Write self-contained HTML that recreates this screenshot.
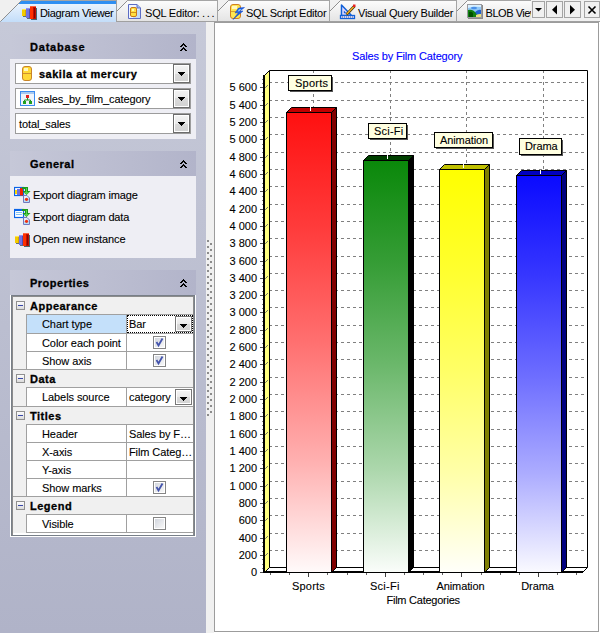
<!DOCTYPE html><html><head><meta charset='utf-8'><style>html,body{margin:0;padding:0;overflow:hidden;background:#fff}#r{position:relative;width:600px;height:633px;overflow:hidden;background:#f0f0f0;font-family:'Liberation Sans', sans-serif}</style></head><body><div id='r'>
<svg width='600' height='22' style='position:absolute;left:0;top:0'><defs><linearGradient id='ina' x1='0' y1='0' x2='0' y2='1'><stop offset='0' stop-color='#fdfdfd'/><stop offset='1' stop-color='#e3e3e3'/></linearGradient><linearGradient id='act' x1='0' y1='0' x2='0' y2='1'><stop offset='0' stop-color='#f2f8fe'/><stop offset='1' stop-color='#c3ddf9'/></linearGradient></defs><rect x='0' y='0' width='600' height='22' fill='#f0f0f0'/><polygon points='446,22 468,0 532,0 532,21 ' fill='url(#ina)'/><line x1='446.5' y1='21.5' x2='467.5' y2='0.5' stroke='#8f8f8f' stroke-width='1'/><rect x='467' y='0' width='64' height='1' fill='#a5a5a5'/><rect x='531' y='0' width='1' height='21' fill='#a5a5a5'/><polygon points='319,22 341,0 457,0 457,21 ' fill='url(#ina)'/><line x1='319.5' y1='21.5' x2='340.5' y2='0.5' stroke='#8f8f8f' stroke-width='1'/><rect x='340' y='0' width='116' height='1' fill='#a5a5a5'/><rect x='456' y='0' width='1' height='21' fill='#a5a5a5'/><polygon points='207,22 229,0 330,0 330,21 ' fill='url(#ina)'/><line x1='207.5' y1='21.5' x2='228.5' y2='0.5' stroke='#8f8f8f' stroke-width='1'/><rect x='228' y='0' width='101' height='1' fill='#a5a5a5'/><rect x='329' y='0' width='1' height='21' fill='#a5a5a5'/><polygon points='106,22 128,0 218,0 218,21 ' fill='url(#ina)'/><line x1='106.5' y1='21.5' x2='127.5' y2='0.5' stroke='#8f8f8f' stroke-width='1'/><rect x='127' y='0' width='90' height='1' fill='#a5a5a5'/><rect x='217' y='0' width='1' height='21' fill='#a5a5a5'/><rect x='0' y='21' width='600' height='1' fill='#a0a0a0'/><polygon points='0,22 22,0 117,0 117,22' fill='url(#act)'/><clipPath id='ac'><polygon points='0,22 22,0 117,0 117,22'/></clipPath><rect x='0' y='1' width='117' height='3' fill='#2f8ff2' clip-path='url(#ac)'/><line x1='0.5' y1='21.5' x2='21.5' y2='0.5' stroke='#8f8f8f' stroke-width='1'/><rect x='21' y='0' width='95' height='1' fill='#a5a5a5'/><rect x='116' y='0' width='1' height='22' fill='#a0a0a0'/><rect x='531' y='0' width='69' height='21' fill='#f0f0f0'/><rect x='532.5' y='1.5' width='12' height='16' fill='#f0f0f0' stroke='#a3a3a3' stroke-width='1'/><rect x='546.5' y='1.5' width='16' height='16' fill='#f0f0f0' stroke='#a3a3a3' stroke-width='1'/><rect x='564.5' y='1.5' width='16' height='16' fill='#f0f0f0' stroke='#a3a3a3' stroke-width='1'/><rect x='584.5' y='1.5' width='15' height='16' fill='#f0f0f0' stroke='#a3a3a3' stroke-width='1'/><polygon points='535,8 542,8 538.5,11.5' fill='#000'/><polygon points='557,5 557,14.5 552,9.75' fill='#000'/><polygon points='570,5 570,14.5 575,9.75' fill='#000'/><path d='M588.5,6.5 L595.5,13.5 M595.5,6.5 L588.5,13.5' stroke='#000' stroke-width='1.6'/><path d='M128.5,4.5 H137 L140.5,8 V18.5 H128.5 Z' fill='#eef4ff' stroke='#5c6cc4'/><path d='M134,11 L140,9 V18 H133 Z' fill='#b8d4f4' opacity='0.8'/><path d='M137,4.5 V8 H140.5' fill='#a0c0ec' stroke='#5c6cc4'/><rect x='130.5' y='7.5' width='6' height='9' rx='1.5' fill='#ffe040' stroke='#c87818'/><rect x='132' y='9' width='2' height='2' fill='#fff8b0'/><line x1='131' y1='12.5' x2='136' y2='12.5' stroke='#d09020'/><rect x='230.5' y='4.5' width='10' height='14' rx='2.5' fill='#ffe650' stroke='#d08020'/><rect x='232' y='6' width='5' height='3' fill='#fff8c0'/><line x1='231' y1='11.5' x2='236' y2='11.5' stroke='#d8a030'/><path d='M244.5,7.5 L238.5,8 L235,13 L238.5,12.5 L233,19.5 L243,11 L239.5,11.2 Z' fill='#1a5ee8' stroke='#0c44c8' stroke-width='0.5'/><path d='M241.5,9 L239,9.3 L237.5,11.5 L239.5,11.2 Z' fill='#8cc8ff'/><path d='M341.5,5 V15.5 H351.5 Z' fill='#e4dcff' stroke='#1060d8' stroke-width='1.5' stroke-linejoin='round'/><path d='M343.8,10.5 V13.3 H346.5 Z' fill='#1060d8'/><rect x='340.5' y='15.5' width='14' height='3' fill='#ece4ff' stroke='#1060d8' stroke-width='1.3'/><path d='M342,17 h1 M344,17 h1 M346,17 h1 M348,17 h1 M350,17 h1 M352,17 h1' stroke='#506080' stroke-width='1'/><path d='M346.5,14.5 L354.5,6' stroke='#3a3010' stroke-width='2.6'/><path d='M346.8,14 L354.2,6.3' stroke='#f8b020' stroke-width='1.4'/><rect x='353' y='4.5' width='2.5' height='2.5' fill='#e82020'/><rect x='468' y='5' width='15' height='14' fill='#8a8a8a'/><rect x='467.5' y='4.5' width='14' height='13' fill='#90c8f8' stroke='#9a9aa0'/><path d='M468,8 Q474,6 481,7 V5 H468 Z' fill='#d8f0ff'/><ellipse cx='474' cy='8' rx='3' ry='1.2' fill='#4a90e8'/><path d='M474,13 Q478,9 481,10 V16 H474 Z' fill='#2060d0'/><path d='M468,10 Q471,9 474,11 Q476,13 477,15 V17 H468 Z' fill='#108010'/><path d='M469,12 Q471,11 473,13 V17 H469 Z' fill='#005000'/><path d='M476,15 Q479,13.5 481,14 V17 H476 Z' fill='#e8e080'/></svg>
<svg width='16' height='15' style='position:absolute;left:22px;top:6px'><rect x='1' y='10' width='4' height='1' fill='#405058' opacity='0.8'/><rect x='5' y='12' width='3' height='1' fill='#405058' opacity='0.8'/><rect x='14' y='2' width='1' height='11' fill='#305058' opacity='0.85'/><rect x='9' y='13' width='6' height='1' fill='#305058' opacity='0.85'/><rect x='0' y='3' width='4' height='7' fill='#f4cc00'/><rect x='0' y='3' width='4' height='1' fill='#ffe650'/><rect x='3' y='4' width='1' height='6' fill='#d8a800'/><rect x='4' y='2' width='4' height='10' fill='#7272e4'/><rect x='4' y='2' width='4' height='1' fill='#9090f0'/><rect x='7' y='3' width='1' height='9' fill='#5050b0'/><rect x='8' y='0' width='6' height='13' fill='#ff3000'/><rect x='8' y='0' width='6' height='1' fill='#ff6040'/><rect x='11' y='1' width='3' height='12' fill='#c01000'/><rect x='12' y='2' width='1' height='10' fill='#900000'/></svg>
<div style="position:absolute;left:40px;top:7.69px;font:normal 11px/11px 'Liberation Sans', sans-serif;color:#000;letter-spacing:-0.33px;white-space:nowrap;-webkit-text-stroke:0.05px #000;">Diagram Viewer</div>
<div style="position:absolute;left:145px;top:7.69px;font:normal 11px/11px 'Liberation Sans', sans-serif;color:#000;letter-spacing:-0.2px;white-space:nowrap;-webkit-text-stroke:0.05px #000;">SQL Editor: <span style='letter-spacing:1.6px'>...</span></div>
<div style="position:absolute;left:246px;top:7.69px;font:normal 11px/11px 'Liberation Sans', sans-serif;color:#000;letter-spacing:-0.25px;white-space:nowrap;-webkit-text-stroke:0.05px #000;">SQL Script Editor</div>
<div style="position:absolute;left:358px;top:7.69px;font:normal 11px/11px 'Liberation Sans', sans-serif;color:#000;letter-spacing:-0.25px;white-space:nowrap;-webkit-text-stroke:0.05px #000;">Visual Query Builder</div>
<div style='position:absolute;left:0;top:0;width:531px;height:22px;overflow:hidden'>
<div style="position:absolute;left:485.5px;top:7.69px;font:normal 11px/11px 'Liberation Sans', sans-serif;color:#000;letter-spacing:-0.45px;white-space:nowrap;-webkit-text-stroke:0.05px #000;">BLOB Viewer</div>
</div>
<div style="position:absolute;left:0px;top:22px;width:206px;height:611px;background:linear-gradient(#c6c9d8,#b0b3c8)"></div>
<div style="position:absolute;left:206px;top:22px;width:8px;height:611px;background:#f0f0f0"></div>
<svg width='600' height='633' style='position:absolute;left:0;top:0'><rect x='207' y='240' width='2' height='2' fill='#8c8c8c'/><rect x='210' y='243' width='2' height='2' fill='#8c8c8c'/><rect x='207' y='246' width='2' height='2' fill='#8c8c8c'/><rect x='210' y='249' width='2' height='2' fill='#8c8c8c'/><rect x='207' y='252' width='2' height='2' fill='#8c8c8c'/><rect x='210' y='255' width='2' height='2' fill='#8c8c8c'/><rect x='207' y='258' width='2' height='2' fill='#8c8c8c'/><rect x='210' y='261' width='2' height='2' fill='#8c8c8c'/><rect x='207' y='264' width='2' height='2' fill='#8c8c8c'/><rect x='210' y='267' width='2' height='2' fill='#8c8c8c'/><rect x='207' y='270' width='2' height='2' fill='#8c8c8c'/><rect x='210' y='273' width='2' height='2' fill='#8c8c8c'/><rect x='207' y='276' width='2' height='2' fill='#8c8c8c'/><rect x='210' y='279' width='2' height='2' fill='#8c8c8c'/><rect x='207' y='282' width='2' height='2' fill='#8c8c8c'/><rect x='210' y='285' width='2' height='2' fill='#8c8c8c'/><rect x='207' y='288' width='2' height='2' fill='#8c8c8c'/><rect x='210' y='291' width='2' height='2' fill='#8c8c8c'/><rect x='207' y='294' width='2' height='2' fill='#8c8c8c'/><rect x='210' y='297' width='2' height='2' fill='#8c8c8c'/><rect x='207' y='300' width='2' height='2' fill='#8c8c8c'/><rect x='210' y='303' width='2' height='2' fill='#8c8c8c'/><rect x='207' y='306' width='2' height='2' fill='#8c8c8c'/><rect x='210' y='309' width='2' height='2' fill='#8c8c8c'/><rect x='207' y='312' width='2' height='2' fill='#8c8c8c'/><rect x='210' y='315' width='2' height='2' fill='#8c8c8c'/><rect x='207' y='318' width='2' height='2' fill='#8c8c8c'/><rect x='210' y='321' width='2' height='2' fill='#8c8c8c'/><rect x='207' y='324' width='2' height='2' fill='#8c8c8c'/><rect x='210' y='327' width='2' height='2' fill='#8c8c8c'/><rect x='207' y='330' width='2' height='2' fill='#8c8c8c'/><rect x='210' y='333' width='2' height='2' fill='#8c8c8c'/><rect x='207' y='336' width='2' height='2' fill='#8c8c8c'/><rect x='210' y='339' width='2' height='2' fill='#8c8c8c'/><rect x='207' y='342' width='2' height='2' fill='#8c8c8c'/><rect x='210' y='345' width='2' height='2' fill='#8c8c8c'/><rect x='207' y='348' width='2' height='2' fill='#8c8c8c'/><rect x='210' y='351' width='2' height='2' fill='#8c8c8c'/><rect x='207' y='354' width='2' height='2' fill='#8c8c8c'/><rect x='210' y='357' width='2' height='2' fill='#8c8c8c'/><rect x='207' y='360' width='2' height='2' fill='#8c8c8c'/><rect x='210' y='363' width='2' height='2' fill='#8c8c8c'/><rect x='207' y='366' width='2' height='2' fill='#8c8c8c'/><rect x='210' y='369' width='2' height='2' fill='#8c8c8c'/><rect x='207' y='372' width='2' height='2' fill='#8c8c8c'/><rect x='210' y='375' width='2' height='2' fill='#8c8c8c'/><rect x='207' y='378' width='2' height='2' fill='#8c8c8c'/><rect x='210' y='381' width='2' height='2' fill='#8c8c8c'/><rect x='207' y='384' width='2' height='2' fill='#8c8c8c'/><rect x='210' y='387' width='2' height='2' fill='#8c8c8c'/><rect x='207' y='390' width='2' height='2' fill='#8c8c8c'/><rect x='210' y='393' width='2' height='2' fill='#8c8c8c'/><rect x='207' y='396' width='2' height='2' fill='#8c8c8c'/><rect x='210' y='399' width='2' height='2' fill='#8c8c8c'/><rect x='207' y='402' width='2' height='2' fill='#8c8c8c'/><rect x='210' y='405' width='2' height='2' fill='#8c8c8c'/><rect x='207' y='408' width='2' height='2' fill='#8c8c8c'/><rect x='210' y='411' width='2' height='2' fill='#8c8c8c'/><rect x='207' y='414' width='2' height='2' fill='#8c8c8c'/></svg>
<div style="position:absolute;left:10px;top:34px;width:186px;height:25px;background:linear-gradient(90deg,#c6c8d8,#b2b4ca)"></div>
<div style="position:absolute;left:30px;top:41.69px;font:bold 11px/11px 'Liberation Sans', sans-serif;color:#000;letter-spacing:0.8px;white-space:nowrap;-webkit-text-stroke:0.3px #000;">Database</div>
<svg width='8' height='8' style='position:absolute;left:180px;top:43px' fill='#000'><rect x='3' y='0' width='1' height='1'/><rect x='2' y='1' width='3' height='1'/><rect x='1' y='2' width='2' height='1'/><rect x='4' y='2' width='2' height='1'/><rect x='0' y='3' width='2' height='1'/><rect x='5' y='3' width='2' height='1'/><rect x='3' y='4' width='1' height='1'/><rect x='2' y='5' width='3' height='1'/><rect x='1' y='6' width='2' height='1'/><rect x='4' y='6' width='2' height='1'/><rect x='0' y='7' width='2' height='1'/><rect x='5' y='7' width='2' height='1'/></svg>
<div style="position:absolute;left:10px;top:59px;width:186px;height:80px;background:#eeeef4"></div>
<div style="position:absolute;left:15px;top:63px;width:176px;height:21px;background:#fff;box-sizing:border-box;border:1px solid #9c9c9c"></div>
<div style="position:absolute;left:173px;top:64px;width:17px;height:19px;box-sizing:border-box;border:1px solid #6c6c6c;background:linear-gradient(#f4f4f4,#e9e9e9 50%,#dadada 50%,#d2d2d2);box-shadow:inset 1px 1px 0 #fff, inset -1px -1px 0 #fff"></div>
<svg width='7' height='4' style='position:absolute;left:178px;top:72px' fill='#000'><rect x='0' y='0' width='7' height='1'/><rect x='1' y='1' width='5' height='1'/><rect x='2' y='2' width='3' height='1'/><rect x='3' y='3' width='1' height='1'/></svg>
<div style="position:absolute;left:15px;top:88px;width:176px;height:21px;background:#fff;box-sizing:border-box;border:1px solid #9c9c9c"></div>
<div style="position:absolute;left:173px;top:89px;width:17px;height:19px;box-sizing:border-box;border:1px solid #6c6c6c;background:linear-gradient(#f4f4f4,#e9e9e9 50%,#dadada 50%,#d2d2d2);box-shadow:inset 1px 1px 0 #fff, inset -1px -1px 0 #fff"></div>
<svg width='7' height='4' style='position:absolute;left:178px;top:97px' fill='#000'><rect x='0' y='0' width='7' height='1'/><rect x='1' y='1' width='5' height='1'/><rect x='2' y='2' width='3' height='1'/><rect x='3' y='3' width='1' height='1'/></svg>
<div style="position:absolute;left:15px;top:113px;width:176px;height:21px;background:#fff;box-sizing:border-box;border:1px solid #9c9c9c"></div>
<div style="position:absolute;left:173px;top:114px;width:17px;height:19px;box-sizing:border-box;border:1px solid #6c6c6c;background:linear-gradient(#f4f4f4,#e9e9e9 50%,#dadada 50%,#d2d2d2);box-shadow:inset 1px 1px 0 #fff, inset -1px -1px 0 #fff"></div>
<svg width='7' height='4' style='position:absolute;left:178px;top:122px' fill='#000'><rect x='0' y='0' width='7' height='1'/><rect x='1' y='1' width='5' height='1'/><rect x='2' y='2' width='3' height='1'/><rect x='3' y='3' width='1' height='1'/></svg>
<svg width='12' height='17' style='position:absolute;left:21px;top:65px'><rect x='1.5' y='1.5' width='9' height='14' rx='2.5' fill='#ffd838' stroke='#c88428'/><rect x='3' y='3' width='4' height='3' fill='#fff8c0'/><line x1='2' y1='8.5' x2='10' y2='8.5' stroke='#d09030'/></svg>
<div style="position:absolute;left:39px;top:68.69px;font:bold 11px/11px 'Liberation Sans', sans-serif;color:#000;letter-spacing:0.5px;white-space:nowrap;-webkit-text-stroke:0.3px #000;">sakila at mercury</div>
<svg width='16' height='16' style='position:absolute;left:20px;top:91px'><rect x='0.5' y='0.5' width='14' height='14' fill='#eef4fc' stroke='#3c8cf0'/><rect x='1' y='1' width='13' height='2' fill='#a8c8f0'/><rect x='6' y='4' width='3' height='3' fill='#e02020'/><path d='M7.5,7 V9 M4.5,11 V9 H10.5 V11' stroke='#209020' fill='none'/><rect x='3' y='10' width='3' height='3' fill='#20a020'/><rect x='9' y='10' width='3' height='3' fill='#20a020'/></svg>
<div style="position:absolute;left:38px;top:93.69px;font:normal 11px/11px 'Liberation Sans', sans-serif;color:#000;letter-spacing:-0.12px;white-space:nowrap;-webkit-text-stroke:0.1px #000;">sales_by_film_category</div>
<div style="position:absolute;left:19px;top:118.69px;font:normal 11px/11px 'Liberation Sans', sans-serif;color:#000;letter-spacing:-0.1px;white-space:nowrap;-webkit-text-stroke:0.1px #000;">total_sales</div>
<div style="position:absolute;left:10px;top:151px;width:186px;height:25px;background:linear-gradient(90deg,#c6c8d8,#b2b4ca)"></div>
<div style="position:absolute;left:30px;top:158.69px;font:bold 11px/11px 'Liberation Sans', sans-serif;color:#000;letter-spacing:0.5px;white-space:nowrap;-webkit-text-stroke:0.3px #000;">General</div>
<svg width='8' height='8' style='position:absolute;left:180px;top:160px' fill='#000'><rect x='3' y='0' width='1' height='1'/><rect x='2' y='1' width='3' height='1'/><rect x='1' y='2' width='2' height='1'/><rect x='4' y='2' width='2' height='1'/><rect x='0' y='3' width='2' height='1'/><rect x='5' y='3' width='2' height='1'/><rect x='3' y='4' width='1' height='1'/><rect x='2' y='5' width='3' height='1'/><rect x='1' y='6' width='2' height='1'/><rect x='4' y='6' width='2' height='1'/><rect x='0' y='7' width='2' height='1'/><rect x='5' y='7' width='2' height='1'/></svg>
<div style="position:absolute;left:10px;top:176px;width:186px;height:82px;background:#eeeef4"></div>
<svg width='18' height='18' style='position:absolute;left:14px;top:186px'><rect x='0.5' y='1.5' width='9' height='8' fill='#fff' stroke='#0a64e8' stroke-width='1.2'/><rect x='1' y='4' width='2' height='4' fill='#f8d800'/><rect x='3' y='3' width='3' height='6' fill='#7070d8'/><rect x='6' y='2' width='3' height='7.5' fill='#f02000'/><path d='M8,1 H14 V5 H16.5 L12.5,9 L8.5,5 H11 V3 H8 Z' fill='#1c9a1c'/><path d='M12,2 H13 V6 H15 L12.5,8.5 L10,6 H12 Z' fill='#58d048'/><path d='M9.5,9.5 H13 L15.5,12 V16.5 H9.5 Z' fill='#e4eefc' stroke='#7078c0'/><path d='M10,14 L15,12 V16 H10 Z' fill='#b8dcf4'/><circle cx='12.5' cy='13.3' r='1.6' fill='#f03010'/></svg>
<div style="position:absolute;left:33px;top:189.69px;font:normal 11px/11px 'Liberation Sans', sans-serif;color:#000;letter-spacing:-0.15px;white-space:nowrap;-webkit-text-stroke:0.1px #000;">Export diagram image</div>
<svg width='18' height='18' style='position:absolute;left:14px;top:208px'><rect x='0.5' y='1.5' width='9' height='8' fill='#fff' stroke='#0a64e8' stroke-width='1.2'/><rect x='0' y='1' width='10' height='2' fill='#0a64e8'/><path d='M2,4.5 H8 M2,6.5 H8' stroke='#80c0f0'/><path d='M8,1 H14 V5 H16.5 L12.5,9 L8.5,5 H11 V3 H8 Z' fill='#1c9a1c'/><path d='M12,2 H13 V6 H15 L12.5,8.5 L10,6 H12 Z' fill='#58d048'/><path d='M9.5,9.5 H13 L15.5,12 V16.5 H9.5 Z' fill='#e4eefc' stroke='#7078c0'/><path d='M10,14 L15,12 V16 H10 Z' fill='#b8dcf4'/><circle cx='12.5' cy='13.3' r='1.6' fill='#f03010'/></svg>
<div style="position:absolute;left:33px;top:211.69px;font:normal 11px/11px 'Liberation Sans', sans-serif;color:#000;letter-spacing:-0.15px;white-space:nowrap;-webkit-text-stroke:0.1px #000;">Export diagram data</div>
<svg width='16' height='15' style='position:absolute;left:15px;top:233px'><rect x='1' y='10' width='4' height='1' fill='#405058' opacity='0.8'/><rect x='5' y='12' width='3' height='1' fill='#405058' opacity='0.8'/><rect x='14' y='2' width='1' height='11' fill='#305058' opacity='0.85'/><rect x='9' y='13' width='6' height='1' fill='#305058' opacity='0.85'/><rect x='0' y='3' width='4' height='7' fill='#f4cc00'/><rect x='0' y='3' width='4' height='1' fill='#ffe650'/><rect x='3' y='4' width='1' height='6' fill='#d8a800'/><rect x='4' y='2' width='4' height='10' fill='#7272e4'/><rect x='4' y='2' width='4' height='1' fill='#9090f0'/><rect x='7' y='3' width='1' height='9' fill='#5050b0'/><rect x='8' y='0' width='6' height='13' fill='#ff3000'/><rect x='8' y='0' width='6' height='1' fill='#ff6040'/><rect x='11' y='1' width='3' height='12' fill='#c01000'/><rect x='12' y='2' width='1' height='10' fill='#900000'/></svg>
<div style="position:absolute;left:33px;top:233.69px;font:normal 11px/11px 'Liberation Sans', sans-serif;color:#000;letter-spacing:-0.1px;white-space:nowrap;-webkit-text-stroke:0.1px #000;">Open new instance</div>
<div style="position:absolute;left:10px;top:270px;width:186px;height:25px;background:linear-gradient(90deg,#c6c8d8,#b2b4ca)"></div>
<div style="position:absolute;left:30px;top:277.69px;font:bold 11px/11px 'Liberation Sans', sans-serif;color:#000;letter-spacing:0.5px;white-space:nowrap;-webkit-text-stroke:0.3px #000;">Properties</div>
<svg width='8' height='8' style='position:absolute;left:180px;top:279px' fill='#000'><rect x='3' y='0' width='1' height='1'/><rect x='2' y='1' width='3' height='1'/><rect x='1' y='2' width='2' height='1'/><rect x='4' y='2' width='2' height='1'/><rect x='0' y='3' width='2' height='1'/><rect x='5' y='3' width='2' height='1'/><rect x='3' y='4' width='1' height='1'/><rect x='2' y='5' width='3' height='1'/><rect x='1' y='6' width='2' height='1'/><rect x='4' y='6' width='2' height='1'/><rect x='0' y='7' width='2' height='1'/><rect x='5' y='7' width='2' height='1'/></svg>
<div style="position:absolute;left:10px;top:295px;width:186px;height:242px;background:#fff"></div>
<div style="position:absolute;left:11px;top:295px;width:184px;height:241px;background:#787f88"></div>
<div style="position:absolute;left:12px;top:296px;width:182px;height:239px;background:#8c8c8c"></div>
<div style="position:absolute;left:13px;top:297px;width:180px;height:236px;background:#f0f0f0"></div>
<svg width='10' height='10' style='position:absolute;left:16px;top:301px'><rect x='0.5' y='0.5' width='8' height='8' fill='url(#mb)' stroke='#909090'/><rect x='2' y='4' width='5' height='1' fill='#3848a8'/></svg>
<div style="position:absolute;left:30px;top:300.69px;font:bold 11px/11px 'Liberation Sans', sans-serif;color:#000;letter-spacing:0.5px;white-space:nowrap;-webkit-text-stroke:0.3px #000;">Appearance</div>
<div style="position:absolute;left:26px;top:314px;width:167px;height:1px;background:#a0a0a0"></div>
<div style="position:absolute;left:27px;top:315px;width:99px;height:18px;background:#c4e0fa"></div>
<div style="position:absolute;left:127px;top:315px;width:66px;height:18px;background:#fff"></div>
<div style="position:absolute;left:26px;top:315px;width:1px;height:18px;background:#a0a0a0"></div>
<div style="position:absolute;left:126px;top:315px;width:1px;height:18px;background:#a0a0a0"></div>
<div style="position:absolute;left:26px;top:333px;width:167px;height:1px;background:#a0a0a0"></div>
<div style="position:absolute;left:42px;top:318.69px;font:normal 11px/11px 'Liberation Sans', sans-serif;color:#000;letter-spacing:-0.08px;white-space:nowrap;-webkit-text-stroke:0.1px #000;">Chart type</div>
<div style="position:absolute;left:129px;top:318.69px;font:normal 11px/11px 'Liberation Sans', sans-serif;color:#000;letter-spacing:-0.05px;white-space:nowrap;-webkit-text-stroke:0.1px #000;">Bar</div>
<div style="position:absolute;left:175px;top:316px;width:17px;height:16px;box-sizing:border-box;border:1px solid #777;background:linear-gradient(#f4f4f4,#e9e9e9 50%,#dadada 50%,#d2d2d2);box-shadow:inset 1px 1px 0 #fff, inset -1px -1px 0 #fff"></div>
<svg width='7' height='4' style='position:absolute;left:180px;top:324px' fill='#000'><rect x='0' y='0' width='7' height='1'/><rect x='1' y='1' width='5' height='1'/><rect x='2' y='2' width='3' height='1'/><rect x='3' y='3' width='1' height='1'/></svg>
<div style="position:absolute;left:27px;top:334px;width:99px;height:17px;background:#fff"></div>
<div style="position:absolute;left:127px;top:334px;width:66px;height:17px;background:#fff"></div>
<div style="position:absolute;left:26px;top:334px;width:1px;height:17px;background:#a0a0a0"></div>
<div style="position:absolute;left:126px;top:334px;width:1px;height:17px;background:#a0a0a0"></div>
<div style="position:absolute;left:26px;top:351px;width:167px;height:1px;background:#a0a0a0"></div>
<div style="position:absolute;left:42px;top:337.69px;font:normal 11px/11px 'Liberation Sans', sans-serif;color:#000;letter-spacing:-0.08px;white-space:nowrap;-webkit-text-stroke:0.1px #000;">Color each point</div>
<svg width='13' height='13' style='position:absolute;left:153px;top:336px'><rect x='0.5' y='0.5' width='12' height='12' fill='#fff' stroke='#858585'/><rect x='2' y='2' width='9' height='9' fill='url(#cb)'/><path d='M3.5,6 L5.5,9.5 L9.5,2.5' fill='none' stroke='#4454ac' stroke-width='1.8'/></svg>
<div style="position:absolute;left:27px;top:352px;width:99px;height:17px;background:#fff"></div>
<div style="position:absolute;left:127px;top:352px;width:66px;height:17px;background:#fff"></div>
<div style="position:absolute;left:26px;top:352px;width:1px;height:17px;background:#a0a0a0"></div>
<div style="position:absolute;left:126px;top:352px;width:1px;height:17px;background:#a0a0a0"></div>
<div style="position:absolute;left:26px;top:369px;width:167px;height:1px;background:#a0a0a0"></div>
<div style="position:absolute;left:42px;top:355.69px;font:normal 11px/11px 'Liberation Sans', sans-serif;color:#000;letter-spacing:-0.08px;white-space:nowrap;-webkit-text-stroke:0.1px #000;">Show axis</div>
<svg width='13' height='13' style='position:absolute;left:153px;top:354px'><rect x='0.5' y='0.5' width='12' height='12' fill='#fff' stroke='#858585'/><rect x='2' y='2' width='9' height='9' fill='url(#cb)'/><path d='M3.5,6 L5.5,9.5 L9.5,2.5' fill='none' stroke='#4454ac' stroke-width='1.8'/></svg>
<svg width='10' height='10' style='position:absolute;left:16px;top:374px'><rect x='0.5' y='0.5' width='8' height='8' fill='url(#mb)' stroke='#909090'/><rect x='2' y='4' width='5' height='1' fill='#3848a8'/></svg>
<div style="position:absolute;left:30px;top:373.69px;font:bold 11px/11px 'Liberation Sans', sans-serif;color:#000;letter-spacing:0.5px;white-space:nowrap;-webkit-text-stroke:0.3px #000;">Data</div>
<div style="position:absolute;left:26px;top:387px;width:167px;height:1px;background:#a0a0a0"></div>
<div style="position:absolute;left:13px;top:369px;width:180px;height:1px;background:#a0a0a0"></div>
<div style="position:absolute;left:27px;top:388px;width:99px;height:18px;background:#fff"></div>
<div style="position:absolute;left:127px;top:388px;width:66px;height:18px;background:#fff"></div>
<div style="position:absolute;left:26px;top:388px;width:1px;height:18px;background:#a0a0a0"></div>
<div style="position:absolute;left:126px;top:388px;width:1px;height:18px;background:#a0a0a0"></div>
<div style="position:absolute;left:26px;top:406px;width:167px;height:1px;background:#a0a0a0"></div>
<div style="position:absolute;left:42px;top:391.69px;font:normal 11px/11px 'Liberation Sans', sans-serif;color:#000;letter-spacing:-0.08px;white-space:nowrap;-webkit-text-stroke:0.1px #000;">Labels source</div>
<div style="position:absolute;left:129px;top:391.69px;font:normal 11px/11px 'Liberation Sans', sans-serif;color:#000;letter-spacing:-0.05px;white-space:nowrap;-webkit-text-stroke:0.1px #000;">category</div>
<div style="position:absolute;left:175px;top:389px;width:17px;height:16px;box-sizing:border-box;border:1px solid #777;background:linear-gradient(#f4f4f4,#e9e9e9 50%,#dadada 50%,#d2d2d2);box-shadow:inset 1px 1px 0 #fff, inset -1px -1px 0 #fff"></div>
<svg width='7' height='4' style='position:absolute;left:180px;top:397px' fill='#000'><rect x='0' y='0' width='7' height='1'/><rect x='1' y='1' width='5' height='1'/><rect x='2' y='2' width='3' height='1'/><rect x='3' y='3' width='1' height='1'/></svg>
<svg width='10' height='10' style='position:absolute;left:16px;top:411px'><rect x='0.5' y='0.5' width='8' height='8' fill='url(#mb)' stroke='#909090'/><rect x='2' y='4' width='5' height='1' fill='#3848a8'/></svg>
<div style="position:absolute;left:30px;top:410.69px;font:bold 11px/11px 'Liberation Sans', sans-serif;color:#000;letter-spacing:0.5px;white-space:nowrap;-webkit-text-stroke:0.3px #000;">Titles</div>
<div style="position:absolute;left:26px;top:424px;width:167px;height:1px;background:#a0a0a0"></div>
<div style="position:absolute;left:13px;top:406px;width:180px;height:1px;background:#a0a0a0"></div>
<div style="position:absolute;left:27px;top:425px;width:99px;height:17px;background:#fff"></div>
<div style="position:absolute;left:127px;top:425px;width:66px;height:17px;background:#fff"></div>
<div style="position:absolute;left:26px;top:425px;width:1px;height:17px;background:#a0a0a0"></div>
<div style="position:absolute;left:126px;top:425px;width:1px;height:17px;background:#a0a0a0"></div>
<div style="position:absolute;left:26px;top:442px;width:167px;height:1px;background:#a0a0a0"></div>
<div style="position:absolute;left:42px;top:428.69px;font:normal 11px/11px 'Liberation Sans', sans-serif;color:#000;letter-spacing:-0.08px;white-space:nowrap;-webkit-text-stroke:0.1px #000;">Header</div>
<div style="position:absolute;left:129px;top:428.69px;font:normal 11px/11px 'Liberation Sans', sans-serif;color:#000;letter-spacing:-0.1px;white-space:nowrap;-webkit-text-stroke:0.1px #000;">Sales by F…</div>
<div style="position:absolute;left:27px;top:443px;width:99px;height:17px;background:#fff"></div>
<div style="position:absolute;left:127px;top:443px;width:66px;height:17px;background:#fff"></div>
<div style="position:absolute;left:26px;top:443px;width:1px;height:17px;background:#a0a0a0"></div>
<div style="position:absolute;left:126px;top:443px;width:1px;height:17px;background:#a0a0a0"></div>
<div style="position:absolute;left:26px;top:460px;width:167px;height:1px;background:#a0a0a0"></div>
<div style="position:absolute;left:42px;top:446.69px;font:normal 11px/11px 'Liberation Sans', sans-serif;color:#000;letter-spacing:-0.08px;white-space:nowrap;-webkit-text-stroke:0.1px #000;">X-axis</div>
<div style="position:absolute;left:129px;top:446.69px;font:normal 11px/11px 'Liberation Sans', sans-serif;color:#000;letter-spacing:-0.1px;white-space:nowrap;-webkit-text-stroke:0.1px #000;">Film Categ…</div>
<div style="position:absolute;left:27px;top:461px;width:99px;height:17px;background:#fff"></div>
<div style="position:absolute;left:127px;top:461px;width:66px;height:17px;background:#fff"></div>
<div style="position:absolute;left:26px;top:461px;width:1px;height:17px;background:#a0a0a0"></div>
<div style="position:absolute;left:126px;top:461px;width:1px;height:17px;background:#a0a0a0"></div>
<div style="position:absolute;left:26px;top:478px;width:167px;height:1px;background:#a0a0a0"></div>
<div style="position:absolute;left:42px;top:464.69px;font:normal 11px/11px 'Liberation Sans', sans-serif;color:#000;letter-spacing:-0.08px;white-space:nowrap;-webkit-text-stroke:0.1px #000;">Y-axis</div>
<div style="position:absolute;left:27px;top:479px;width:99px;height:17px;background:#fff"></div>
<div style="position:absolute;left:127px;top:479px;width:66px;height:17px;background:#fff"></div>
<div style="position:absolute;left:26px;top:479px;width:1px;height:17px;background:#a0a0a0"></div>
<div style="position:absolute;left:126px;top:479px;width:1px;height:17px;background:#a0a0a0"></div>
<div style="position:absolute;left:26px;top:496px;width:167px;height:1px;background:#a0a0a0"></div>
<div style="position:absolute;left:42px;top:482.69px;font:normal 11px/11px 'Liberation Sans', sans-serif;color:#000;letter-spacing:-0.08px;white-space:nowrap;-webkit-text-stroke:0.1px #000;">Show marks</div>
<svg width='13' height='13' style='position:absolute;left:153px;top:481px'><rect x='0.5' y='0.5' width='12' height='12' fill='#fff' stroke='#858585'/><rect x='2' y='2' width='9' height='9' fill='url(#cb)'/><path d='M3.5,6 L5.5,9.5 L9.5,2.5' fill='none' stroke='#4454ac' stroke-width='1.8'/></svg>
<svg width='10' height='10' style='position:absolute;left:16px;top:501px'><rect x='0.5' y='0.5' width='8' height='8' fill='url(#mb)' stroke='#909090'/><rect x='2' y='4' width='5' height='1' fill='#3848a8'/></svg>
<div style="position:absolute;left:30px;top:500.69px;font:bold 11px/11px 'Liberation Sans', sans-serif;color:#000;letter-spacing:0.5px;white-space:nowrap;-webkit-text-stroke:0.3px #000;">Legend</div>
<div style="position:absolute;left:26px;top:514px;width:167px;height:1px;background:#a0a0a0"></div>
<div style="position:absolute;left:13px;top:496px;width:180px;height:1px;background:#a0a0a0"></div>
<div style="position:absolute;left:27px;top:515px;width:99px;height:17px;background:#fff"></div>
<div style="position:absolute;left:127px;top:515px;width:66px;height:17px;background:#fff"></div>
<div style="position:absolute;left:26px;top:515px;width:1px;height:17px;background:#a0a0a0"></div>
<div style="position:absolute;left:126px;top:515px;width:1px;height:17px;background:#a0a0a0"></div>
<div style="position:absolute;left:26px;top:532px;width:167px;height:1px;background:#a0a0a0"></div>
<div style="position:absolute;left:42px;top:518.69px;font:normal 11px/11px 'Liberation Sans', sans-serif;color:#000;letter-spacing:-0.08px;white-space:nowrap;-webkit-text-stroke:0.1px #000;">Visible</div>
<svg width='13' height='13' style='position:absolute;left:153px;top:517px'><rect x='0.5' y='0.5' width='12' height='12' fill='#fff' stroke='#858585'/><rect x='2' y='2' width='9' height='9' fill='url(#cb)'/></svg>
<div style="position:absolute;left:127px;top:315px;width:66px;height:18px;box-sizing:border-box;border:1px dotted #000"></div>
<svg width='0' height='0' style='position:absolute'><defs><linearGradient id='cb' x1='0' y1='0' x2='1' y2='1'><stop offset='0' stop-color='#d2d6de'/><stop offset='1' stop-color='#f8f8f8'/></linearGradient><linearGradient id='mb' x1='0' y1='0' x2='0' y2='1'><stop offset='0' stop-color='#fff'/><stop offset='1' stop-color='#d8d8d8'/></linearGradient></defs></svg>
<div style="position:absolute;left:13px;top:533px;width:180px;height:2px;background:#fff"></div>
<div style="position:absolute;left:214px;top:22px;width:385px;height:610px;background:#9c9c9c"></div>
<div style="position:absolute;left:215px;top:23px;width:383px;height:608px;background:#fff"></div>
<div style="position:absolute;left:599px;top:22px;width:1px;height:611px;background:#fff"></div>
<div style="position:absolute;left:214px;top:632px;width:386px;height:1px;background:#fff"></div>
<svg width='600' height='633' style='position:absolute;left:0;top:0'><defs><linearGradient id='g0' x1='0' y1='0' x2='0' y2='1'><stop offset='0' stop-color='#ff1010'/><stop offset='0.25' stop-color='#ff3b3b'/><stop offset='0.5' stop-color='#ff7070'/><stop offset='0.75' stop-color='#ffaeae'/><stop offset='1' stop-color='#fffafa'/></linearGradient><linearGradient id='g1' x1='0' y1='0' x2='0' y2='1'><stop offset='0' stop-color='#0a880a'/><stop offset='0.25' stop-color='#369d36'/><stop offset='0.5' stop-color='#6cb86c'/><stop offset='0.75' stop-color='#acd7ac'/><stop offset='1' stop-color='#fafdfa'/></linearGradient><linearGradient id='g2' x1='0' y1='0' x2='0' y2='1'><stop offset='0' stop-color='#ffff00'/><stop offset='0.25' stop-color='#ffff2e'/><stop offset='0.5' stop-color='#ffff66'/><stop offset='0.75' stop-color='#ffffa8'/><stop offset='1' stop-color='#fffffa'/></linearGradient><linearGradient id='g3' x1='0' y1='0' x2='0' y2='1'><stop offset='0' stop-color='#0a0aff'/><stop offset='0.25' stop-color='#3636ff'/><stop offset='0.5' stop-color='#6c6cff'/><stop offset='0.75' stop-color='#acacff'/><stop offset='1' stop-color='#fafaff'/></linearGradient></defs><line x1='269' y1='550.5' x2='585' y2='550.5' stroke='#808080' stroke-dasharray='3 3'/><line x1='269' y1='533.5' x2='585' y2='533.5' stroke='#808080' stroke-dasharray='3 3'/><line x1='269' y1='515.5' x2='585' y2='515.5' stroke='#808080' stroke-dasharray='3 3'/><line x1='269' y1='498.5' x2='585' y2='498.5' stroke='#808080' stroke-dasharray='3 3'/><line x1='269' y1='481.5' x2='585' y2='481.5' stroke='#808080' stroke-dasharray='3 3'/><line x1='269' y1='463.5' x2='585' y2='463.5' stroke='#808080' stroke-dasharray='3 3'/><line x1='269' y1='446.5' x2='585' y2='446.5' stroke='#808080' stroke-dasharray='3 3'/><line x1='269' y1='429.5' x2='585' y2='429.5' stroke='#808080' stroke-dasharray='3 3'/><line x1='269' y1='411.5' x2='585' y2='411.5' stroke='#808080' stroke-dasharray='3 3'/><line x1='269' y1='394.5' x2='585' y2='394.5' stroke='#808080' stroke-dasharray='3 3'/><line x1='269' y1='377.5' x2='585' y2='377.5' stroke='#808080' stroke-dasharray='3 3'/><line x1='269' y1='359.5' x2='585' y2='359.5' stroke='#808080' stroke-dasharray='3 3'/><line x1='269' y1='342.5' x2='585' y2='342.5' stroke='#808080' stroke-dasharray='3 3'/><line x1='269' y1='325.5' x2='585' y2='325.5' stroke='#808080' stroke-dasharray='3 3'/><line x1='269' y1='307.5' x2='585' y2='307.5' stroke='#808080' stroke-dasharray='3 3'/><line x1='269' y1='290.5' x2='585' y2='290.5' stroke='#808080' stroke-dasharray='3 3'/><line x1='269' y1='273.5' x2='585' y2='273.5' stroke='#808080' stroke-dasharray='3 3'/><line x1='269' y1='256.5' x2='585' y2='256.5' stroke='#808080' stroke-dasharray='3 3'/><line x1='269' y1='238.5' x2='585' y2='238.5' stroke='#808080' stroke-dasharray='3 3'/><line x1='269' y1='221.5' x2='585' y2='221.5' stroke='#808080' stroke-dasharray='3 3'/><line x1='269' y1='204.5' x2='585' y2='204.5' stroke='#808080' stroke-dasharray='3 3'/><line x1='269' y1='186.5' x2='585' y2='186.5' stroke='#808080' stroke-dasharray='3 3'/><line x1='269' y1='169.5' x2='585' y2='169.5' stroke='#808080' stroke-dasharray='3 3'/><line x1='269' y1='152.5' x2='585' y2='152.5' stroke='#808080' stroke-dasharray='3 3'/><line x1='269' y1='134.5' x2='585' y2='134.5' stroke='#808080' stroke-dasharray='3 3'/><line x1='269' y1='117.5' x2='585' y2='117.5' stroke='#808080' stroke-dasharray='3 3'/><line x1='269' y1='100.5' x2='585' y2='100.5' stroke='#808080' stroke-dasharray='3 3'/><line x1='269' y1='82.5' x2='585' y2='82.5' stroke='#808080' stroke-dasharray='3 3'/><line x1='313.5' y1='70' x2='313.5' y2='567' stroke='#808080' stroke-dasharray='3 3'/><line x1='390.5' y1='70' x2='390.5' y2='567' stroke='#808080' stroke-dasharray='3 3'/><line x1='466.5' y1='70' x2='466.5' y2='567' stroke='#808080' stroke-dasharray='3 3'/><line x1='543.5' y1='70' x2='543.5' y2='567' stroke='#808080' stroke-dasharray='3 3'/><polygon points='264.5,75.5 269.5,70.5 269.5,567.5 264.5,572.5' fill='#ffff80' stroke='#000'/><rect x='265' y='555' width='1' height='1' fill='#909070'/><rect x='266' y='554' width='1' height='1' fill='#707060'/><rect x='267' y='553' width='1' height='1' fill='#808068'/><rect x='265' y='538' width='1' height='1' fill='#909070'/><rect x='266' y='537' width='1' height='1' fill='#707060'/><rect x='267' y='536' width='1' height='1' fill='#808068'/><rect x='265' y='520' width='1' height='1' fill='#909070'/><rect x='266' y='519' width='1' height='1' fill='#707060'/><rect x='267' y='518' width='1' height='1' fill='#808068'/><rect x='265' y='503' width='1' height='1' fill='#909070'/><rect x='266' y='502' width='1' height='1' fill='#707060'/><rect x='267' y='501' width='1' height='1' fill='#808068'/><rect x='265' y='486' width='1' height='1' fill='#909070'/><rect x='266' y='485' width='1' height='1' fill='#707060'/><rect x='267' y='484' width='1' height='1' fill='#808068'/><rect x='265' y='468' width='1' height='1' fill='#909070'/><rect x='266' y='467' width='1' height='1' fill='#707060'/><rect x='267' y='466' width='1' height='1' fill='#808068'/><rect x='265' y='451' width='1' height='1' fill='#909070'/><rect x='266' y='450' width='1' height='1' fill='#707060'/><rect x='267' y='449' width='1' height='1' fill='#808068'/><rect x='265' y='434' width='1' height='1' fill='#909070'/><rect x='266' y='433' width='1' height='1' fill='#707060'/><rect x='267' y='432' width='1' height='1' fill='#808068'/><rect x='265' y='416' width='1' height='1' fill='#909070'/><rect x='266' y='415' width='1' height='1' fill='#707060'/><rect x='267' y='414' width='1' height='1' fill='#808068'/><rect x='265' y='399' width='1' height='1' fill='#909070'/><rect x='266' y='398' width='1' height='1' fill='#707060'/><rect x='267' y='397' width='1' height='1' fill='#808068'/><rect x='265' y='382' width='1' height='1' fill='#909070'/><rect x='266' y='381' width='1' height='1' fill='#707060'/><rect x='267' y='380' width='1' height='1' fill='#808068'/><rect x='265' y='364' width='1' height='1' fill='#909070'/><rect x='266' y='363' width='1' height='1' fill='#707060'/><rect x='267' y='362' width='1' height='1' fill='#808068'/><rect x='265' y='347' width='1' height='1' fill='#909070'/><rect x='266' y='346' width='1' height='1' fill='#707060'/><rect x='267' y='345' width='1' height='1' fill='#808068'/><rect x='265' y='330' width='1' height='1' fill='#909070'/><rect x='266' y='329' width='1' height='1' fill='#707060'/><rect x='267' y='328' width='1' height='1' fill='#808068'/><rect x='265' y='312' width='1' height='1' fill='#909070'/><rect x='266' y='311' width='1' height='1' fill='#707060'/><rect x='267' y='310' width='1' height='1' fill='#808068'/><rect x='265' y='295' width='1' height='1' fill='#909070'/><rect x='266' y='294' width='1' height='1' fill='#707060'/><rect x='267' y='293' width='1' height='1' fill='#808068'/><rect x='265' y='278' width='1' height='1' fill='#909070'/><rect x='266' y='277' width='1' height='1' fill='#707060'/><rect x='267' y='276' width='1' height='1' fill='#808068'/><rect x='265' y='261' width='1' height='1' fill='#909070'/><rect x='266' y='260' width='1' height='1' fill='#707060'/><rect x='267' y='259' width='1' height='1' fill='#808068'/><rect x='265' y='243' width='1' height='1' fill='#909070'/><rect x='266' y='242' width='1' height='1' fill='#707060'/><rect x='267' y='241' width='1' height='1' fill='#808068'/><rect x='265' y='226' width='1' height='1' fill='#909070'/><rect x='266' y='225' width='1' height='1' fill='#707060'/><rect x='267' y='224' width='1' height='1' fill='#808068'/><rect x='265' y='209' width='1' height='1' fill='#909070'/><rect x='266' y='208' width='1' height='1' fill='#707060'/><rect x='267' y='207' width='1' height='1' fill='#808068'/><rect x='265' y='191' width='1' height='1' fill='#909070'/><rect x='266' y='190' width='1' height='1' fill='#707060'/><rect x='267' y='189' width='1' height='1' fill='#808068'/><rect x='265' y='174' width='1' height='1' fill='#909070'/><rect x='266' y='173' width='1' height='1' fill='#707060'/><rect x='267' y='172' width='1' height='1' fill='#808068'/><rect x='265' y='157' width='1' height='1' fill='#909070'/><rect x='266' y='156' width='1' height='1' fill='#707060'/><rect x='267' y='155' width='1' height='1' fill='#808068'/><rect x='265' y='139' width='1' height='1' fill='#909070'/><rect x='266' y='138' width='1' height='1' fill='#707060'/><rect x='267' y='137' width='1' height='1' fill='#808068'/><rect x='265' y='122' width='1' height='1' fill='#909070'/><rect x='266' y='121' width='1' height='1' fill='#707060'/><rect x='267' y='120' width='1' height='1' fill='#808068'/><rect x='265' y='105' width='1' height='1' fill='#909070'/><rect x='266' y='104' width='1' height='1' fill='#707060'/><rect x='267' y='103' width='1' height='1' fill='#808068'/><rect x='265' y='87' width='1' height='1' fill='#909070'/><rect x='266' y='86' width='1' height='1' fill='#707060'/><rect x='267' y='85' width='1' height='1' fill='#808068'/><path d='M269.5,70.5 H587.5 V567.5' fill='none' stroke='#000'/><polygon points='264.5,572.5 269.5,567.5 587.5,567.5 582.5,572.5' fill='#fff' stroke='#000'/><rect x='263' y='75' width='2' height='498' fill='#000'/><rect x='263' y='571' width='320' height='2' fill='#000'/><rect x='260' y='572' width='3' height='1' fill='#505050'/><rect x='260' y='555' width='3' height='1' fill='#505050'/><rect x='260' y='538' width='3' height='1' fill='#505050'/><rect x='260' y='520' width='3' height='1' fill='#505050'/><rect x='260' y='503' width='3' height='1' fill='#505050'/><rect x='260' y='486' width='3' height='1' fill='#505050'/><rect x='260' y='468' width='3' height='1' fill='#505050'/><rect x='260' y='451' width='3' height='1' fill='#505050'/><rect x='260' y='434' width='3' height='1' fill='#505050'/><rect x='260' y='416' width='3' height='1' fill='#505050'/><rect x='260' y='399' width='3' height='1' fill='#505050'/><rect x='260' y='382' width='3' height='1' fill='#505050'/><rect x='260' y='364' width='3' height='1' fill='#505050'/><rect x='260' y='347' width='3' height='1' fill='#505050'/><rect x='260' y='330' width='3' height='1' fill='#505050'/><rect x='260' y='312' width='3' height='1' fill='#505050'/><rect x='260' y='295' width='3' height='1' fill='#505050'/><rect x='260' y='278' width='3' height='1' fill='#505050'/><rect x='260' y='261' width='3' height='1' fill='#505050'/><rect x='260' y='243' width='3' height='1' fill='#505050'/><rect x='260' y='226' width='3' height='1' fill='#505050'/><rect x='260' y='209' width='3' height='1' fill='#505050'/><rect x='260' y='191' width='3' height='1' fill='#505050'/><rect x='260' y='174' width='3' height='1' fill='#505050'/><rect x='260' y='157' width='3' height='1' fill='#505050'/><rect x='260' y='139' width='3' height='1' fill='#505050'/><rect x='260' y='122' width='3' height='1' fill='#505050'/><rect x='260' y='105' width='3' height='1' fill='#505050'/><rect x='260' y='87' width='3' height='1' fill='#505050'/><rect x='262' y='568' width='1' height='1' fill='#808080'/><rect x='262' y='564' width='1' height='1' fill='#808080'/><rect x='262' y='559' width='1' height='1' fill='#808080'/><rect x='262' y='551' width='1' height='1' fill='#808080'/><rect x='262' y='546' width='1' height='1' fill='#808080'/><rect x='262' y='542' width='1' height='1' fill='#808080'/><rect x='262' y='533' width='1' height='1' fill='#808080'/><rect x='262' y='529' width='1' height='1' fill='#808080'/><rect x='262' y='525' width='1' height='1' fill='#808080'/><rect x='262' y='516' width='1' height='1' fill='#808080'/><rect x='262' y='512' width='1' height='1' fill='#808080'/><rect x='262' y='507' width='1' height='1' fill='#808080'/><rect x='262' y='499' width='1' height='1' fill='#808080'/><rect x='262' y='494' width='1' height='1' fill='#808080'/><rect x='262' y='490' width='1' height='1' fill='#808080'/><rect x='262' y='481' width='1' height='1' fill='#808080'/><rect x='262' y='477' width='1' height='1' fill='#808080'/><rect x='262' y='473' width='1' height='1' fill='#808080'/><rect x='262' y='464' width='1' height='1' fill='#808080'/><rect x='262' y='460' width='1' height='1' fill='#808080'/><rect x='262' y='455' width='1' height='1' fill='#808080'/><rect x='262' y='447' width='1' height='1' fill='#808080'/><rect x='262' y='442' width='1' height='1' fill='#808080'/><rect x='262' y='438' width='1' height='1' fill='#808080'/><rect x='262' y='429' width='1' height='1' fill='#808080'/><rect x='262' y='425' width='1' height='1' fill='#808080'/><rect x='262' y='421' width='1' height='1' fill='#808080'/><rect x='262' y='412' width='1' height='1' fill='#808080'/><rect x='262' y='408' width='1' height='1' fill='#808080'/><rect x='262' y='403' width='1' height='1' fill='#808080'/><rect x='262' y='395' width='1' height='1' fill='#808080'/><rect x='262' y='390' width='1' height='1' fill='#808080'/><rect x='262' y='386' width='1' height='1' fill='#808080'/><rect x='262' y='377' width='1' height='1' fill='#808080'/><rect x='262' y='373' width='1' height='1' fill='#808080'/><rect x='262' y='369' width='1' height='1' fill='#808080'/><rect x='262' y='360' width='1' height='1' fill='#808080'/><rect x='262' y='356' width='1' height='1' fill='#808080'/><rect x='262' y='351' width='1' height='1' fill='#808080'/><rect x='262' y='343' width='1' height='1' fill='#808080'/><rect x='262' y='338' width='1' height='1' fill='#808080'/><rect x='262' y='334' width='1' height='1' fill='#808080'/><rect x='262' y='325' width='1' height='1' fill='#808080'/><rect x='262' y='321' width='1' height='1' fill='#808080'/><rect x='262' y='317' width='1' height='1' fill='#808080'/><rect x='262' y='308' width='1' height='1' fill='#808080'/><rect x='262' y='304' width='1' height='1' fill='#808080'/><rect x='262' y='299' width='1' height='1' fill='#808080'/><rect x='262' y='291' width='1' height='1' fill='#808080'/><rect x='262' y='286' width='1' height='1' fill='#808080'/><rect x='262' y='282' width='1' height='1' fill='#808080'/><rect x='262' y='273' width='1' height='1' fill='#808080'/><rect x='262' y='269' width='1' height='1' fill='#808080'/><rect x='262' y='265' width='1' height='1' fill='#808080'/><rect x='262' y='256' width='1' height='1' fill='#808080'/><rect x='262' y='252' width='1' height='1' fill='#808080'/><rect x='262' y='248' width='1' height='1' fill='#808080'/><rect x='262' y='239' width='1' height='1' fill='#808080'/><rect x='262' y='235' width='1' height='1' fill='#808080'/><rect x='262' y='230' width='1' height='1' fill='#808080'/><rect x='262' y='222' width='1' height='1' fill='#808080'/><rect x='262' y='217' width='1' height='1' fill='#808080'/><rect x='262' y='213' width='1' height='1' fill='#808080'/><rect x='262' y='204' width='1' height='1' fill='#808080'/><rect x='262' y='200' width='1' height='1' fill='#808080'/><rect x='262' y='196' width='1' height='1' fill='#808080'/><rect x='262' y='187' width='1' height='1' fill='#808080'/><rect x='262' y='183' width='1' height='1' fill='#808080'/><rect x='262' y='178' width='1' height='1' fill='#808080'/><rect x='262' y='170' width='1' height='1' fill='#808080'/><rect x='262' y='165' width='1' height='1' fill='#808080'/><rect x='262' y='161' width='1' height='1' fill='#808080'/><rect x='262' y='152' width='1' height='1' fill='#808080'/><rect x='262' y='148' width='1' height='1' fill='#808080'/><rect x='262' y='144' width='1' height='1' fill='#808080'/><rect x='262' y='135' width='1' height='1' fill='#808080'/><rect x='262' y='131' width='1' height='1' fill='#808080'/><rect x='262' y='126' width='1' height='1' fill='#808080'/><rect x='262' y='118' width='1' height='1' fill='#808080'/><rect x='262' y='113' width='1' height='1' fill='#808080'/><rect x='262' y='109' width='1' height='1' fill='#808080'/><rect x='262' y='100' width='1' height='1' fill='#808080'/><rect x='262' y='96' width='1' height='1' fill='#808080'/><rect x='262' y='92' width='1' height='1' fill='#808080'/><rect x='262' y='83' width='1' height='1' fill='#808080'/><rect x='262' y='79' width='1' height='1' fill='#808080'/><rect x='270' y='573' width='1' height='2' fill='#606060'/><rect x='289' y='573' width='1' height='2' fill='#606060'/><rect x='308' y='573' width='1' height='4' fill='#404040'/><rect x='327' y='573' width='1' height='2' fill='#606060'/><rect x='347' y='573' width='1' height='2' fill='#606060'/><rect x='366' y='573' width='1' height='2' fill='#606060'/><rect x='385' y='573' width='1' height='4' fill='#404040'/><rect x='404' y='573' width='1' height='2' fill='#606060'/><rect x='423' y='573' width='1' height='2' fill='#606060'/><rect x='442' y='573' width='1' height='2' fill='#606060'/><rect x='461' y='573' width='1' height='4' fill='#404040'/><rect x='481' y='573' width='1' height='2' fill='#606060'/><rect x='500' y='573' width='1' height='2' fill='#606060'/><rect x='519' y='573' width='1' height='2' fill='#606060'/><rect x='538' y='573' width='1' height='4' fill='#404040'/><rect x='557' y='573' width='1' height='2' fill='#606060'/><rect x='576' y='573' width='1' height='2' fill='#606060'/><rect x='286.5' y='112.5' width='45' height='460' fill='url(#g0)' stroke='#000'/><polygon points='286.5,112.5 291.5,107.5 336.5,107.5 331.5,112.5' fill='#c00000' stroke='#000'/><polygon points='331.5,112.5 336.5,107.5 336.5,567.5 331.5,572.5' fill='#800000' stroke='#000'/><rect x='310' y='107' width='1' height='4' fill='#fff'/><rect x='363.5' y='160.5' width='45' height='412' fill='url(#g1)' stroke='#000'/><polygon points='363.5,160.5 368.5,155.5 413.5,155.5 408.5,160.5' fill='#004000' stroke='#000'/><polygon points='408.5,160.5 413.5,155.5 413.5,567.5 408.5,572.5' fill='#000000' stroke='#000'/><rect x='387' y='155' width='1' height='4' fill='#fff'/><rect x='439.5' y='169.5' width='45' height='403' fill='url(#g2)' stroke='#000'/><polygon points='439.5,169.5 444.5,164.5 489.5,164.5 484.5,169.5' fill='#c0c000' stroke='#000'/><polygon points='484.5,169.5 489.5,164.5 489.5,567.5 484.5,572.5' fill='#808000' stroke='#000'/><rect x='463' y='164' width='1' height='4' fill='#fff'/><rect x='516.5' y='175.5' width='45' height='397' fill='url(#g3)' stroke='#000'/><polygon points='516.5,175.5 521.5,170.5 566.5,170.5 561.5,175.5' fill='#0000c0' stroke='#000'/><polygon points='561.5,175.5 566.5,170.5 566.5,567.5 561.5,572.5' fill='#000080' stroke='#000'/><rect x='540' y='170' width='1' height='4' fill='#fff'/><rect x='290' y='77' width='43' height='15' fill='#555555'/><rect x='288.5' y='75.5' width='43' height='15' fill='#ffffe1' stroke='#000'/><rect x='370' y='125' width='38' height='15' fill='#555555'/><rect x='368.5' y='123.5' width='38' height='15' fill='#ffffe1' stroke='#000'/><rect x='436' y='134' width='58' height='15' fill='#555555'/><rect x='434.5' y='132.5' width='58' height='15' fill='#ffffe1' stroke='#000'/><rect x='521' y='140' width='42' height='16' fill='#555555'/><rect x='519.5' y='138.5' width='42' height='16' fill='#ffffe1' stroke='#000'/></svg>
<div style="position:absolute;left:295px;top:78.09px;font:normal 11px/11px 'Liberation Sans', sans-serif;color:#000;letter-spacing:0.25px;white-space:nowrap;-webkit-text-stroke:0.1px #000;">Sports</div>
<div style="position:absolute;left:374px;top:126.09px;font:normal 11px/11px 'Liberation Sans', sans-serif;color:#000;letter-spacing:0.2px;white-space:nowrap;-webkit-text-stroke:0.1px #000;">Sci-Fi</div>
<div style="position:absolute;left:440px;top:135.09px;font:normal 11px/11px 'Liberation Sans', sans-serif;color:#000;letter-spacing:-0.1px;white-space:nowrap;-webkit-text-stroke:0.1px #000;">Animation</div>
<div style="position:absolute;left:525px;top:141.09px;font:normal 11px/11px 'Liberation Sans', sans-serif;color:#000;letter-spacing:-0.1px;white-space:nowrap;-webkit-text-stroke:0.1px #000;">Drama</div>
<div style="position:absolute;right:343px;top:567.00px;font:11px/11px 'Liberation Sans', sans-serif;color:#000;white-space:nowrap;-webkit-text-stroke:0.1px #000">0</div>
<div style="position:absolute;right:343px;top:550.00px;font:11px/11px 'Liberation Sans', sans-serif;color:#000;white-space:nowrap;-webkit-text-stroke:0.1px #000">200</div>
<div style="position:absolute;right:343px;top:533.00px;font:11px/11px 'Liberation Sans', sans-serif;color:#000;white-space:nowrap;-webkit-text-stroke:0.1px #000">400</div>
<div style="position:absolute;right:343px;top:515.00px;font:11px/11px 'Liberation Sans', sans-serif;color:#000;white-space:nowrap;-webkit-text-stroke:0.1px #000">600</div>
<div style="position:absolute;right:343px;top:498.00px;font:11px/11px 'Liberation Sans', sans-serif;color:#000;white-space:nowrap;-webkit-text-stroke:0.1px #000">800</div>
<div style="position:absolute;right:343px;top:481.00px;font:11px/11px 'Liberation Sans', sans-serif;color:#000;white-space:nowrap;-webkit-text-stroke:0.1px #000">1 000</div>
<div style="position:absolute;right:343px;top:463.00px;font:11px/11px 'Liberation Sans', sans-serif;color:#000;white-space:nowrap;-webkit-text-stroke:0.1px #000">1 200</div>
<div style="position:absolute;right:343px;top:446.00px;font:11px/11px 'Liberation Sans', sans-serif;color:#000;white-space:nowrap;-webkit-text-stroke:0.1px #000">1 400</div>
<div style="position:absolute;right:343px;top:429.00px;font:11px/11px 'Liberation Sans', sans-serif;color:#000;white-space:nowrap;-webkit-text-stroke:0.1px #000">1 600</div>
<div style="position:absolute;right:343px;top:411.00px;font:11px/11px 'Liberation Sans', sans-serif;color:#000;white-space:nowrap;-webkit-text-stroke:0.1px #000">1 800</div>
<div style="position:absolute;right:343px;top:394.00px;font:11px/11px 'Liberation Sans', sans-serif;color:#000;white-space:nowrap;-webkit-text-stroke:0.1px #000">2 000</div>
<div style="position:absolute;right:343px;top:377.00px;font:11px/11px 'Liberation Sans', sans-serif;color:#000;white-space:nowrap;-webkit-text-stroke:0.1px #000">2 200</div>
<div style="position:absolute;right:343px;top:359.00px;font:11px/11px 'Liberation Sans', sans-serif;color:#000;white-space:nowrap;-webkit-text-stroke:0.1px #000">2 400</div>
<div style="position:absolute;right:343px;top:342.00px;font:11px/11px 'Liberation Sans', sans-serif;color:#000;white-space:nowrap;-webkit-text-stroke:0.1px #000">2 600</div>
<div style="position:absolute;right:343px;top:325.00px;font:11px/11px 'Liberation Sans', sans-serif;color:#000;white-space:nowrap;-webkit-text-stroke:0.1px #000">2 800</div>
<div style="position:absolute;right:343px;top:307.00px;font:11px/11px 'Liberation Sans', sans-serif;color:#000;white-space:nowrap;-webkit-text-stroke:0.1px #000">3 000</div>
<div style="position:absolute;right:343px;top:290.00px;font:11px/11px 'Liberation Sans', sans-serif;color:#000;white-space:nowrap;-webkit-text-stroke:0.1px #000">3 200</div>
<div style="position:absolute;right:343px;top:273.00px;font:11px/11px 'Liberation Sans', sans-serif;color:#000;white-space:nowrap;-webkit-text-stroke:0.1px #000">3 400</div>
<div style="position:absolute;right:343px;top:256.00px;font:11px/11px 'Liberation Sans', sans-serif;color:#000;white-space:nowrap;-webkit-text-stroke:0.1px #000">3 600</div>
<div style="position:absolute;right:343px;top:238.00px;font:11px/11px 'Liberation Sans', sans-serif;color:#000;white-space:nowrap;-webkit-text-stroke:0.1px #000">3 800</div>
<div style="position:absolute;right:343px;top:221.00px;font:11px/11px 'Liberation Sans', sans-serif;color:#000;white-space:nowrap;-webkit-text-stroke:0.1px #000">4 000</div>
<div style="position:absolute;right:343px;top:204.00px;font:11px/11px 'Liberation Sans', sans-serif;color:#000;white-space:nowrap;-webkit-text-stroke:0.1px #000">4 200</div>
<div style="position:absolute;right:343px;top:186.00px;font:11px/11px 'Liberation Sans', sans-serif;color:#000;white-space:nowrap;-webkit-text-stroke:0.1px #000">4 400</div>
<div style="position:absolute;right:343px;top:169.00px;font:11px/11px 'Liberation Sans', sans-serif;color:#000;white-space:nowrap;-webkit-text-stroke:0.1px #000">4 600</div>
<div style="position:absolute;right:343px;top:152.00px;font:11px/11px 'Liberation Sans', sans-serif;color:#000;white-space:nowrap;-webkit-text-stroke:0.1px #000">4 800</div>
<div style="position:absolute;right:343px;top:134.00px;font:11px/11px 'Liberation Sans', sans-serif;color:#000;white-space:nowrap;-webkit-text-stroke:0.1px #000">5 000</div>
<div style="position:absolute;right:343px;top:117.00px;font:11px/11px 'Liberation Sans', sans-serif;color:#000;white-space:nowrap;-webkit-text-stroke:0.1px #000">5 200</div>
<div style="position:absolute;right:343px;top:100.00px;font:11px/11px 'Liberation Sans', sans-serif;color:#000;white-space:nowrap;-webkit-text-stroke:0.1px #000">5 400</div>
<div style="position:absolute;right:343px;top:82.00px;font:11px/11px 'Liberation Sans', sans-serif;color:#000;white-space:nowrap;-webkit-text-stroke:0.1px #000">5 600</div>
<div style="position:absolute;left:352px;top:50.69px;font:normal 11px/11px 'Liberation Sans', sans-serif;color:#0000ff;letter-spacing:-0.15px;white-space:nowrap;-webkit-text-stroke:0.1px #0000ff;">Sales by Film Category</div>
<div style="position:absolute;left:258.5px;width:100px;text-align:center;top:581.40px;font:11px/11px 'Liberation Sans', sans-serif;color:#000;white-space:nowrap;letter-spacing:0.2px;-webkit-text-stroke:0.1px #000">Sports</div>
<div style="position:absolute;left:334.8px;width:100px;text-align:center;top:581.40px;font:11px/11px 'Liberation Sans', sans-serif;color:#000;white-space:nowrap;letter-spacing:0.25px;-webkit-text-stroke:0.1px #000">Sci-Fi</div>
<div style="position:absolute;left:410.5px;width:100px;text-align:center;top:581.40px;font:11px/11px 'Liberation Sans', sans-serif;color:#000;white-space:nowrap;letter-spacing:-0.1px;-webkit-text-stroke:0.1px #000">Animation</div>
<div style="position:absolute;left:487.5px;width:100px;text-align:center;top:581.40px;font:11px/11px 'Liberation Sans', sans-serif;color:#000;white-space:nowrap;letter-spacing:-0.1px;-webkit-text-stroke:0.1px #000">Drama</div>
<div style="position:absolute;left:386.5px;top:594.69px;font:normal 11px/11px 'Liberation Sans', sans-serif;color:#000;letter-spacing:-0.25px;white-space:nowrap;-webkit-text-stroke:0.1px #000;">Film Categories</div>
</div></body></html>
